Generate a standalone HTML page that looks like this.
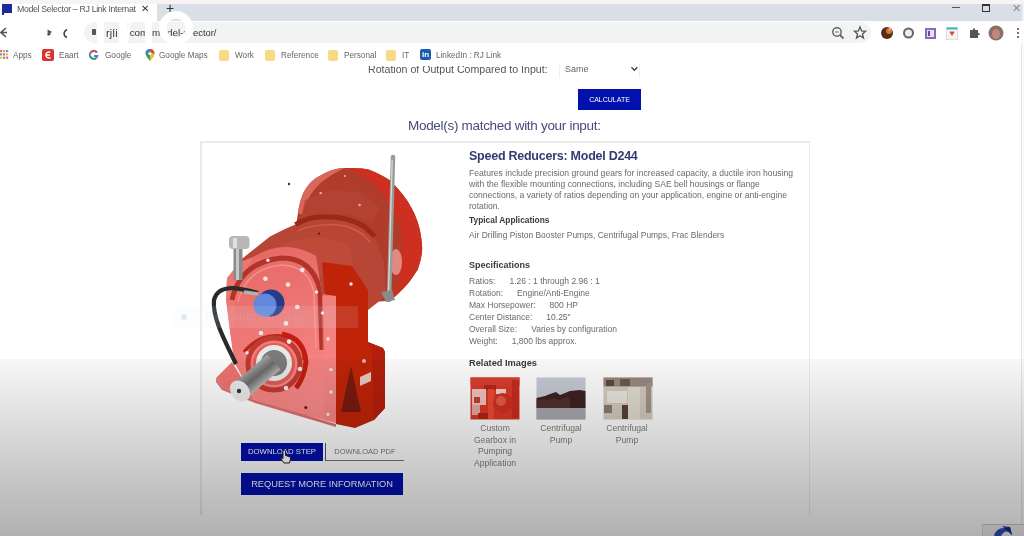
<!DOCTYPE html>
<html><head><meta charset="utf-8">
<style>
*{margin:0;padding:0;box-sizing:border-box}
html,body{width:1024px;height:536px;overflow:hidden;background:#fff;filter:blur(0.45px);font-family:"Liberation Sans",sans-serif}
.a{position:absolute;white-space:nowrap}
#topstrip{left:0;top:0;width:1024px;height:4px;background:#f8f4f3}
#tabstrip{left:0;top:4px;width:1024px;height:17px;background:#dadee6}
#tab{left:0;top:4px;width:157px;height:17px;background:#fff}
#toolbar{left:0;top:21px;width:1024px;height:22px;background:#fff}
#omni{left:84px;top:22px;width:787px;height:21px;background:#f1f3f4;border-radius:11px}
.ui{font-size:9.5px;color:#3c4043}
.bm{font-size:8.2px;color:#666}
.folder{width:10px;height:11px;background:#f8da84;border-radius:2px}
.page{font-size:8px;color:#6a6a6a}
.h{font-weight:bold;color:#3a3a3a;font-size:9px}
.btn{background:#0210ae;color:#fff;text-align:center}
</style></head><body>
<div class="a" id="topstrip"></div>
<div class="a" id="tabstrip"></div>
<div class="a" id="tab"></div>
<!-- favicon -->
<div class="a" style="left:2px;top:4px;width:10px;height:9px;background:#1a2a9c"></div>
<div class="a" style="left:2px;top:11px;width:2px;height:4px;background:#1a2a9c"></div>
<div class="a" style="left:17px;top:4px;font-size:8.8px;letter-spacing:-0.35px;color:#555">Model Selector – RJ Link Internat</div>
<div class="a" style="left:141px;top:3px;font-size:10px;color:#333">✕</div>
<div class="a" style="left:166px;top:0px;font-size:14px;color:#333">+</div>
<!-- window controls -->
<div class="a" style="left:952px;top:7px;width:8px;height:1px;background:#555"></div>
<div class="a" style="left:982px;top:4px;width:8px;height:8px;border:1px solid #333;border-top-width:2px"></div>
<div class="a" style="left:1012px;top:2px;font-size:11px;color:#888">✕</div>

<div class="a" id="toolbar"></div>
<div class="a" style="left:1022px;top:3px;width:2px;height:18px;background:#f2f2f2"></div>
<div class="a" id="omni"></div>
<!-- back/forward/reload -->
<svg class="a" style="left:0;top:21px" width="100" height="22" viewBox="0 21 100 22">
<path d="M6 28 L1 32.5 L6 37 M1 32.5 L7 32.5" fill="none" stroke="#555" stroke-width="1.6"/>
<path d="M47.5 30.5 L50.5 32 L47.5 33.5 M47.5 35 L50.5 34" fill="none" stroke="#444" stroke-width="1.4"/>
<path d="M67 29.5 Q63 32 64.5 35.5 Q65.5 37 67 37.5" fill="none" stroke="#444" stroke-width="1.6"/>
</svg>
<div class="a" style="left:92px;top:29px;width:4px;height:6px;background:#555;border-radius:1px"></div>
<div class="a" style="left:106px;top:27px;font-size:10.6px;letter-spacing:0.3px;color:#333">rjli</div><div class="a" style="left:127px;top:27px;font-size:9.8px;color:#333">.com</div><div class="a" style="left:152px;top:27px;font-size:9.8px;color:#333">m</div><div class="a" style="left:167px;top:27px;font-size:9.8px;color:#333">del-s</div><div class="a" style="left:193px;top:27px;font-size:9.4px;color:#333">ector/</div>
<!-- watermark -->
<div class="a" style="left:0;top:0;width:1024px;height:50px;pointer-events:none">
<svg width="1024" height="50" style="position:absolute;left:0;top:0">
<g fill="rgba(255,255,255,0.97)">
<rect x="97" y="21" width="7" height="22"/>
<rect x="119" y="21" width="8" height="22"/>
<path d="M125 43 L129 21 L131 21 L128 43 Z"/>
<rect x="145" y="21" width="7" height="22"/>
</g>
<circle cx="176" cy="28" r="13.2" fill="none" stroke="rgba(255,255,255,0.97)" stroke-width="7.6"/>
</svg></div>
<!-- right icons -->
<svg class="a" style="left:820px;top:20px" width="204" height="26" viewBox="820 20 204 26">
<circle cx="837" cy="32" r="4.2" fill="none" stroke="#666" stroke-width="1.5"/>
<path d="M840 35 L843.5 38.5" stroke="#666" stroke-width="1.8"/>
<path d="M835 32 L839 32" stroke="#777" stroke-width="1"/>
<path d="M860 27 L861.6 31 L865.5 31.3 L862.5 34 L863.5 38 L860 35.8 L856.5 38 L857.5 34 L854.5 31.3 L858.4 31 Z" fill="none" stroke="#555" stroke-width="1.3"/>
<circle cx="887" cy="33" r="6" fill="#5a2a14"/>
<circle cx="889" cy="31" r="3" fill="#c87a30"/>
<circle cx="890" cy="29" r="1.5" fill="#f0a0a0"/>
<circle cx="908.5" cy="33" r="4.5" fill="#eee" stroke="#666" stroke-width="2"/>
<rect x="925" y="28" width="11" height="11" fill="#8a6ab8"/>
<rect x="927" y="30" width="7" height="7" fill="#e8e0f0"/>
<rect x="928" y="31" width="2" height="5" fill="#6a4a98"/>
<rect x="946.5" y="27.5" width="11" height="12" fill="#f4f4f4" stroke="#ccc" stroke-width="0.6"/>
<rect x="946.5" y="27.5" width="11" height="2" fill="#40b8b8"/>
<path d="M949.5 32 Q952 30 952 33 Q952 30 954.5 32 L952 36 Z" fill="#d84040"/>
<path d="M970 30 L973 30 Q973 27.5 975 28.5 L975 30 L978 30 L978 33 Q980.5 33 979.5 35 L978 35 L978 38 L970 38 Z" fill="#555"/>
<circle cx="996" cy="33" r="7.5" fill="#8a7068"/>
<ellipse cx="996" cy="34" rx="4" ry="5" fill="#c08878"/>
<circle cx="1018" cy="29" r="1.1" fill="#555"/><circle cx="1018" cy="33" r="1.1" fill="#555"/><circle cx="1018" cy="37" r="1.1" fill="#555"/>
</svg>

<!-- bookmarks -->
<svg class="a" style="left:0;top:48px" width="100" height="14" viewBox="0 48 100 14">
<g><rect x="0" y="50" width="2.2" height="2.2" fill="#e86a5a"/><rect x="3" y="50" width="2.2" height="2.2" fill="#e8a040"/><rect x="6" y="50" width="2.2" height="2.2" fill="#5a9ae0"/>
<rect x="0" y="53.3" width="2.2" height="2.2" fill="#5a9ae0"/><rect x="3" y="53.3" width="2.2" height="2.2" fill="#e86a5a"/><rect x="6" y="53.3" width="2.2" height="2.2" fill="#e8c040"/>
<rect x="0" y="56.6" width="2.2" height="2.2" fill="#e8c040"/><rect x="3" y="56.6" width="2.2" height="2.2" fill="#5ab070"/><rect x="6" y="56.6" width="2.2" height="2.2" fill="#e86a5a"/></g>
<rect x="42" y="49" width="12" height="12" rx="2" fill="#d8352a"/>
<path d="M50.5 52 Q46 51.5 46 55 Q46 58.5 50.5 58 M46 55 L50 55" fill="none" stroke="#fff" stroke-width="1.5"/>
<path d="M97 52.5 A4 4 0 1 0 97.5 56 L94 56" fill="none" stroke="#4a80e0" stroke-width="1.8"/>
<path d="M97 52.5 A4 4 0 0 0 90.5 53" fill="none" stroke="#e84a3a" stroke-width="1.8"/>
<path d="M90.3 56 A4 4 0 0 0 96 58.5" fill="none" stroke="#3aa050" stroke-width="1.8"/>
</svg>
<div class="a bm" style="left:13px;top:51px">Apps</div>
<div class="a bm" style="left:59px;top:51px">Eaart</div>
<div class="a bm" style="left:105px;top:51px">Google</div>
<svg class="a" style="left:144px;top:48px" width="12" height="14" viewBox="0 0 12 14"><path d="M6 13 Q1.5 7.5 1.5 5.5 A4.5 4.5 0 0 1 10.5 5.5 Q10.5 7.5 6 13 Z" fill="#3aa050"/><path d="M1.5 5.5 A4.5 4.5 0 0 1 6 1 L6 5.5 Z" fill="#4a80e0"/><path d="M6 1 A4.5 4.5 0 0 1 10.5 5.5 L6 5.5 Z" fill="#e84a3a"/><path d="M10.5 5.5 Q10.5 7.5 6 13 L6 5.5 Z" fill="#f0c030"/><circle cx="6" cy="5.5" r="1.6" fill="#fff"/></svg>
<div class="a bm" style="left:159px;top:51px">Google Maps</div>
<div class="a folder" style="left:219px;top:50px"></div>
<div class="a bm" style="left:235px;top:51px">Work</div>
<div class="a folder" style="left:265px;top:50px"></div>
<div class="a bm" style="left:281px;top:51px">Reference</div>
<div class="a folder" style="left:328px;top:50px"></div>
<div class="a bm" style="left:344px;top:51px">Personal</div>
<div class="a folder" style="left:386px;top:50px"></div>
<div class="a bm" style="left:402px;top:51px">IT</div>
<div class="a" style="left:420px;top:49px;width:11px;height:11px;background:#1a5ab0;border-radius:2px;color:#fff;font-size:8px;font-weight:bold;line-height:12px;text-align:center">in</div>
<div class="a bm" style="left:436px;top:51px">LinkedIn : RJ Link</div>

<!-- page top -->
<div class="a page" style="left:368px;top:63px;font-size:10.6px;line-height:12px;color:#555;clip-path:inset(3px 0 0 0)">Rotation of Output Compared to Input:</div>
<div class="a" style="left:559px;top:63px;width:81px;height:15px;border-right:1px solid #eee;border-left:1px solid #f2f0ee"></div>
<div class="a page" style="left:565px;top:64px;font-size:9px;color:#666">Same</div>
<svg class="a" style="left:628px;top:63px" width="12" height="10" viewBox="628 63 12 10"><path d="M631.5 67.2 L634.4 70.2 L637.3 67.2" fill="none" stroke="#444" stroke-width="1.4"/></svg>
<div class="a btn" style="left:578px;top:89px;width:63px;height:21px;font-size:7px;line-height:21px">CALCULATE</div>
<div class="a" style="left:408px;top:118px;font-size:13.5px;letter-spacing:-0.3px;color:#474b7a">Model(s) matched with your input:</div>

<!-- card -->
<div class="a" style="left:200px;top:141px;width:610px;height:374px;border:2px solid #efeaea;border-width:2px 1.5px 0 2px"></div>

<svg class="a" style="left:0;top:0" width="1024" height="536" viewBox="0 0 1024 536">
<defs>
<linearGradient id="shaftg" x1="0.65" y1="0.76" x2="0" y2="0" gradientUnits="objectBoundingBox">
<stop offset="0" stop-color="#d0d0d0"/><stop offset="0.3" stop-color="#6a6a6a"/><stop offset="0.55" stop-color="#a8a8a8"/><stop offset="0.8" stop-color="#f0f0f0"/><stop offset="1" stop-color="#c0c0c0"/></linearGradient>
<linearGradient id="bellhl" x1="0" y1="0" x2="1" y2="1">
<stop offset="0" stop-color="#d8645a"/><stop offset="0.5" stop-color="#b53a2e"/></linearGradient>
<linearGradient id="ffg" x1="0" y1="0" x2="0.25" y2="1">
<stop offset="0" stop-color="#e46664"/><stop offset="0.5" stop-color="#ee7674"/><stop offset="1" stop-color="#fa8a88"/></linearGradient>
<clipPath id="ffclip"><path d="M226 300 L227 278 L240 262 L255 256 Q285 238 316 256 L322 294 L336 296 L336 423 L300 414 L255 400 L234 362 Z"/></clipPath>
</defs>
<!-- bell housing -->
<path d="M296 226 L298 212.7 C300 200 303 193 305.8 188.8 C310 182 315 178 320.7 175.4 C330 170 337 168 344.6 168 C352 168 360 168 368.5 169.4 C376 172 383 176 389.4 179.9 C397 187 402 193 407.3 200.7 C413 210 417 218 419.3 227.6 C421 235 422 242 422.2 248.5 C422 256 420 263 417.8 269.4 C414 275 411 280 407.3 284.3 C403 289 399 293 395.4 296.3 L388 301 L368 302 L340 282 Z" fill="#b03c2c"/>
<path d="M298 212.7 C300 200 303 193 305.8 188.8 C310 182 315 178 320.7 175.4 C330 170 337 168 344.6 168 C334 173 322 180 314 190 C308 198 304 206 302 215 Z" fill="#d8685c"/>
<path d="M344.6 168 C352 168 360 168 368.5 169.4 C376 172 383 176 389.4 179.9 C397 187 402 193 407.3 200.7 C413 210 417 218 419.3 227.6 C421 235 422 242 422.2 248.5 C422 256 420 263 417.8 269.4 C414 275 411 280 407.3 284.3 C403 289 399 293 395.4 296.3 L390 299 C396 290 400 280 398.4 269.4 C402 255 403 245 401.3 233.6 C398 222 394 212 389.4 203.7 C382 192 372 182 360 175 Z" fill="#cc3020"/>
<ellipse cx="396" cy="262" rx="6" ry="13" fill="#ea9890" opacity="0.85"/>
<path d="M305 200 L330 190 L360 192 L380 208 L372 222 L345 214 L318 216 L300 222 Z" fill="#b44434" opacity="0.8"/>
<!-- middle cylinder -->
<path d="M238 262 L258 246 L270 236.6 L285 229 L295.4 224.6 L317.8 217.2 L344.6 218.7 L365.5 227.6 L374.5 236.6 L384 262 L386 296 L368 310 L330 300 Z" fill="#b84636"/>
<path d="M295.4 224.6 C305 219 312 217 317.8 217.2 C328 216 337 217 344.6 218.7 C353 221 360 224 365.5 227.6 C369 231 372 233 374.5 236.6" fill="none" stroke="#9c2818" stroke-width="5"/>
<path d="M298 231 C310 225 330 223 345 226 C356 229 364 234 370 242" fill="none" stroke="#d85a4c" stroke-width="1.3"/>
<path d="M280 246 C300 236 330 234 350 246 L356 290 L320 275 L300 258 Z" fill="#c04c3c" opacity="0.75"/>
<!-- right side face -->
<path d="M322 262 L352 266 L368 290 L368 342 L383 348 L385 352 L385 408 L374 420 L355 428 L336 424 Z" fill="#c02408"/>
<path d="M368 342 L383 348 L385 352 L385 408 L374 420 L372 352 Z" fill="#b41e0c"/>
<path d="M341 412 L351 366 L361 412 Z" fill="#7a1a10"/>
<path d="M360 377 L371 372 L371 381 L360 386 Z" fill="#e8c8c0"/><circle cx="364" cy="361" r="2" fill="#d8b8b0"/>
<!-- front face -->
<path d="M226 300 L227 278 L240 262 L255 256 Q285 238 316 256 L322 294 L336 296 L336 423 L300 414 L255 400 L234 362 Z" fill="url(#ffg)"/>
<g clip-path="url(#ffclip)">
<path d="M226 280 L240 262 L252 258 L236 300 L232 340 L228 330 Z" fill="#ec7a76" opacity="0.8"/>
<path d="M232 300 Q240 262 282 258 Q312 258 320 290 L322 350" fill="none" stroke="#b03428" stroke-width="5"/>
<path d="M238 302 Q246 268 282 265 Q308 266 314 292 L316 348" fill="none" stroke="#f49a94" stroke-width="1.5" opacity="0.8"/>

<path d="M244 352 Q262 330 292 338 Q306 346 304 360" fill="none" stroke="#b82818" stroke-width="3.5"/>
<path d="M282 334 Q304 338 306 362 Q304 378 296 388" fill="none" stroke="#c01e10" stroke-width="5"/>
<circle cx="274" cy="364" r="26" fill="none" stroke="#bf3a30" stroke-width="5"/>
<circle cx="274" cy="364" r="21" fill="#dc5e56"/>
<path d="M322 296 L336 296 L336 423 L324 420 Z" fill="#f28482" opacity="0.7"/>
</g>
<!-- base plate left -->
<path d="M216 378 L232 362 L255 400 L222 387 Z" fill="#ee7470"/>
<path d="M216 378 L222 387 L255 400 L336 424 L336 427 L255 403 L222 390 L216 382 Z" fill="#e07070"/>
<!-- flange around shaft -->
<circle cx="274" cy="363" r="18" fill="#e8e8e8"/>
<circle cx="274" cy="363" r="13" fill="#7a7a7a"/>
<!-- shaft -->
<path d="M246.5 398.6 L233.5 383.4 L267.5 354.4 L280.5 369.6 Z" fill="url(#shaftg)"/>
<ellipse cx="240" cy="391" rx="9" ry="11.5" fill="#eaeaea" transform="rotate(-40 240 391)"/>
<circle cx="239" cy="391" r="2.2" fill="#333"/>
<!-- blue cap -->
<circle cx="271" cy="303" r="13.5" fill="#283a8a"/>
<circle cx="265" cy="305" r="11.5" fill="#6088dc"/>
<!-- hose -->
<path d="M258 293 C236 287 218 284 214 300 C212 318 226 343 236 364" fill="none" stroke="#2a2a2a" stroke-width="4.2"/>
<path d="M244 292 L258 294" stroke="#b0b0b0" stroke-width="3.5"/>
<!-- breather -->
<rect x="233.5" y="248" width="9" height="32" fill="#8a8a8a"/>
<rect x="236" y="248" width="3" height="32" fill="#c8c8c8"/>
<rect x="229" y="236" width="20.5" height="13" rx="4" fill="#b8b8b8"/>
<rect x="233" y="238" width="4" height="10" fill="#e0e0e0"/>
<!-- bolts -->
<g fill="#f2e4e4">
<circle cx="265.4" cy="278.7" r="2.3"/><circle cx="288" cy="284.6" r="2.3"/><circle cx="302.3" cy="270" r="2.3"/>
<circle cx="297.3" cy="307" r="2.3"/><circle cx="286" cy="323.4" r="2.3"/><circle cx="261" cy="333" r="2.3"/>
<circle cx="289" cy="341.6" r="2.3"/><circle cx="300" cy="369" r="2.3"/><circle cx="286" cy="388" r="2.3"/>
<circle cx="267.9" cy="260.2" r="1.7"/><circle cx="316.5" cy="292" r="1.7"/><circle cx="322.5" cy="313" r="1.7"/>
<circle cx="328" cy="339" r="1.7"/><circle cx="331" cy="369.6" r="1.7"/><circle cx="331" cy="392" r="1.7"/>
<circle cx="328" cy="414.4" r="1.7"/><circle cx="351" cy="284" r="1.7"/><circle cx="247" cy="352.8" r="1.7"/>

</g>
<circle cx="305.8" cy="407.4" r="1.5" fill="#5a1a14"/>
<!-- dipstick -->
<path d="M393 157 L389 300" stroke="#9a9a9a" stroke-width="4.5" stroke-linecap="round"/>
<path d="M392.2 160 L388.4 298" stroke="#dcdcdc" stroke-width="1.2"/>
<circle cx="289" cy="184" r="1.2" fill="#333"/>
<g fill="#e8a8a0"><circle cx="320.7" cy="193" r="1.3"/><circle cx="359.6" cy="205" r="1.3"/><circle cx="345" cy="176" r="1"/></g>
<circle cx="319" cy="233.6" r="1.2" fill="#6a1a10"/>
<path d="M381 292 L392 290 L395 300 L386 302 Z" fill="#8a8a8a"/>
</svg>
<!-- tooltip overlay -->
<div class="a" style="left:174px;top:306px;width:184px;height:22px;background:rgba(232,240,252,0.12)"></div>
<div class="a" style="left:181px;top:314px;width:6px;height:6px;border-radius:50%;background:rgba(200,200,200,0.4)"></div>
<div class="a" style="left:205px;top:309px;font-size:13px;color:rgba(215,215,220,0.12)">Rectangular Snip</div>

<div class="a" style="left:469px;top:149px;font-size:12.5px;letter-spacing:-0.25px;font-weight:bold;color:#353a72">Speed Reducers: Model D244</div>
<div class="a page" style="left:469px;top:167.8px;line-height:11px;font-size:8.58px">Features include precision ground gears for increased capacity, a ductile iron housing<br>with the flexible mounting connections, including SAE bell housings or flange<br>connections, a variety of ratios depending on your application, engine or anti-engine<br>rotation.</div>
<div class="a h" style="left:469px;top:215px;font-size:8.4px">Typical Applications</div>
<div class="a page" style="left:469px;top:230px;font-size:8.44px">Air Drilling Piston Booster Pumps, Centrifugal Pumps, Frac Blenders</div>
<div class="a h" style="left:469px;top:260px;font-size:9px">Specifications</div>
<div class="a page" style="left:469px;top:275px;line-height:12px;font-size:8.5px">Ratios:<span style="margin-left:14px">1.26 : 1 through 2.96 : 1</span><br>Rotation:<span style="margin-left:14px">Engine/Anti-Engine</span><br>Max Horsepower:<span style="margin-left:14px">800 HP</span><br>Center Distance:<span style="margin-left:14px">10.25"</span><br>Overall Size:<span style="margin-left:14px">Varies by configuration</span><br>Weight:<span style="margin-left:14px">1,800 lbs approx.</span></div>
<div class="a h" style="left:469px;top:358px;font-size:9.27px">Related Images</div>
<svg class="a" style="left:470px;top:377px" width="184" height="43" viewBox="0 0 184 43">
<rect x="0.5" y="0.5" width="49" height="42" fill="#dc3828"/>
<rect x="0.5" y="0.5" width="49" height="8" fill="#d84030"/>
<rect x="14" y="8" width="12" height="5" fill="#b02818"/>
<rect x="2" y="12" width="14" height="16" fill="#eec4bc"/>
<rect x="4" y="20" width="6" height="6" fill="#c04030"/>
<rect x="2" y="28" width="8" height="10" fill="#e8a8a0"/>
<rect x="18" y="12" width="6" height="30" fill="#ee4a30"/>
<rect x="26" y="12" width="10" height="5" fill="#f4d0c8"/>
<circle cx="33" cy="26" r="10" fill="#d03020"/>
<circle cx="31" cy="24" r="5" fill="#e65a48"/>
<rect x="42" y="3" width="7" height="38" fill="#c82c1e"/>
<rect x="8" y="36" width="10" height="6" fill="#b02418"/>
<rect x="66.5" y="0.5" width="49" height="42" fill="#c6cad6"/>
<path d="M66.5 21 L75 19 L80 17 L86 15 L90 18 L95 16 L100 14 L110 13 L115.5 14 L115.5 31 L66.5 31 Z" fill="#3e2222"/>
<path d="M66.5 24 L72 22 L78 23 L84 21 L90 23 L96 20 L100 22 L100 31 L66.5 31 Z" fill="#5a3a34" opacity="0.6"/>
<rect x="66.5" y="31" width="49" height="11.5" fill="#a8a8b0"/>
<rect x="133.5" y="0.5" width="49" height="42" fill="#d2cabc"/>
<rect x="133.5" y="0.5" width="49" height="9" fill="#9a8a80"/>
<rect x="136" y="3" width="8" height="6" fill="#5a4a42"/>
<rect x="150" y="2" width="10" height="7" fill="#6a5a52"/>
<rect x="137" y="14" width="20" height="12" fill="#ebe6dc"/>
<rect x="158" y="10" width="12" height="32" fill="#e2dccf"/>
<rect x="152" y="28" width="6" height="14" fill="#5a4038"/>
<rect x="134" y="28" width="8" height="8" fill="#8a7a70"/>
<rect x="176" y="6" width="5" height="30" fill="#a09488"/>
</svg>
<div class="a page" style="left:470px;top:423px;width:50px;text-align:center;line-height:11.7px;white-space:normal;font-size:8.6px;color:#7c7c7c">Custom Gearbox in Pumping Application</div>
<div class="a page" style="left:536px;top:423px;width:50px;text-align:center;line-height:11.7px;white-space:normal;font-size:8.6px;color:#7c7c7c">Centrifugal Pump</div>
<div class="a page" style="left:602px;top:423px;width:50px;text-align:center;line-height:11.7px;white-space:normal;font-size:8.6px;color:#7c7c7c">Centrifugal Pump</div>

<div class="a btn" style="left:241px;top:443px;width:82px;height:18px;font-size:7.75px;line-height:18px">DOWNLOAD STEP</div>
<div class="a" style="left:325px;top:443px;width:79px;height:18px;font-size:7.5px;line-height:17px;color:#777;text-align:center;border-left:1.5px solid #555;border-bottom:1.5px solid #777">DOWNLOAD PDF</div>
<div class="a btn" style="left:241px;top:473px;width:162px;height:22px;font-size:9.27px;line-height:22px">REQUEST MORE INFORMATION</div>

<svg class="a" style="left:279px;top:449px" width="14" height="16" viewBox="0 0 14 16">
<path d="M4 1.5 Q5.5 0.5 6.5 1.5 L6.5 6.5 L10 7.5 Q12 8 11.5 10 L10.5 14 L5 14 L2 10 Q1.5 8.5 3.5 9 L4 9.5 Z" fill="#fff" stroke="#222" stroke-width="1"/>
</svg>
<!-- overlay gradient -->

<div class="a" style="left:1021px;top:43px;width:3px;height:493px;background:#fafafa;border-left:1px solid #e6e6e6"></div>
<div class="a" style="left:982px;top:524px;width:42px;height:12px;background:#f2f2f2;border-top:1px solid #ccc;border-left:1px solid #ddd"></div>
<svg class="a" style="left:990px;top:526px" width="26" height="10" viewBox="0 0 26 10"><path d="M4 10 Q6 2 14 2 L12 0 L20 1 L22 9 L19 6 Q14 4 11 10 Z" fill="#2a50c0"/><path d="M14 2 L20 1 L22 9 L19 6 Z" fill="#102a90"/></svg>
<div class="a" style="left:0;top:359px;width:1024px;height:177px;background:linear-gradient(rgba(0,0,0,0.03),rgba(0,0,0,0.31))"></div>
</body></html>
